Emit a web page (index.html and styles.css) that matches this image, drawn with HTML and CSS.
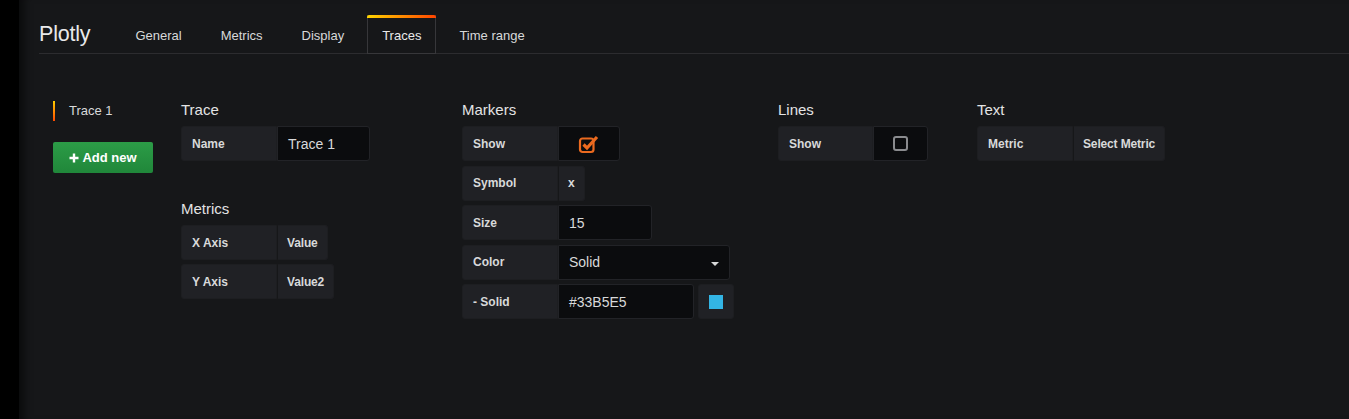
FILE: index.html
```html
<!DOCTYPE html>
<html>
<head>
<meta charset="utf-8">
<link rel="stylesheet" href="styles.css">
</head>
<body>
<div class="page">
  <div class="strip"></div>
  <div class="panel">
    <div class="header">
      <div class="title">Plotly</div>
      <div class="tab">General</div>
      <div class="tab">Metrics</div>
      <div class="tab">Display</div>
      <div class="tab active">Traces</div>
      <div class="tab">Time range</div>
    </div>
    <div class="content">
      <div class="sidebar">
        <div class="trace-item">Trace 1</div>
        <button class="btn-add"><svg class="plus" width="10" height="10" viewBox="0 0 10 10"><path d="M5 0.5V9.5M0.5 5H9.5" stroke="#fff" stroke-width="2.4"/></svg>Add new</button>
      </div>

      <div class="section sec-trace">
        <div class="heading">Trace</div>
        <div class="row">
          <div class="label w96">Name</div>
          <div class="input w93">Trace 1</div>
        </div>
        <div class="heading mt">Metrics</div>
        <div class="row">
          <div class="label w96">X Axis</div>
          <div class="label val">Value</div>
        </div>
        <div class="row">
          <div class="label w96">Y Axis</div>
          <div class="label val">Value2</div>
        </div>
      </div>

      <div class="section sec-markers">
        <div class="heading">Markers</div>
        <div class="row">
          <div class="label w96">Show</div>
          <div class="input cbox w62">
            <svg width="22" height="20" viewBox="0 0 22 20"><rect x="2" y="4.5" width="13.5" height="13.5" rx="2.5" fill="none" stroke="#eb6a1f" stroke-width="2.2"/><path d="M5.5 10.5L9 14L19 3" fill="none" stroke="#eb6a1f" stroke-width="3.2"/></svg>
          </div>
        </div>
        <div class="row">
          <div class="label w96">Symbol</div>
          <div class="label val">x</div>
        </div>
        <div class="row">
          <div class="label w96">Size</div>
          <div class="input w94">15</div>
        </div>
        <div class="row">
          <div class="label w96">Color</div>
          <div class="input select w172">Solid<span class="caret"></span></div>
        </div>
        <div class="row">
          <div class="label w96">- Solid</div>
          <div class="input w136">#33B5E5</div>
          <div class="label swatch-box"><span class="swatch"></span></div>
        </div>
      </div>

      <div class="section sec-lines">
        <div class="heading">Lines</div>
        <div class="row">
          <div class="label w95">Show</div>
          <div class="input cbox w55"><span class="unchecked"></span></div>
        </div>
      </div>

      <div class="section sec-text">
        <div class="heading">Text</div>
        <div class="row">
          <div class="label w96">Metric</div>
          <div class="label val">Select Metric</div>
        </div>
      </div>
    </div>
  </div>
</div>
</body>
</html>
```

FILE: styles.css
```css
html, body {
  margin: 0;
  padding: 0;
  background: #000;
  height: 100%;
}
body {
  font-family: "Liberation Sans", Arial, sans-serif;
  color: #d8d9da;
}
.page {
  display: flex;
  height: 419px;
}
.strip {
  width: 19px;
  background: #000;
  flex: none;
}
.panel {
  flex: 1;
  background: #161719;
  box-shadow: inset 11px 0 9px -6px rgba(0, 0, 0, 0.55);
  padding-left: 20px;
}
.header {
  display: flex;
  align-items: stretch;
  margin-top: 15px;
  height: 38px;
  border-bottom: 1px solid #2c2c2f;
}
.title {
  font-size: 21.5px;
  color: #e9e9ea;
  display: flex;
  align-items: center;
  margin-right: 29px;
  letter-spacing: -0.2px;
  padding-top: 1px;
}
.tab {
  font-size: 13px;
  color: #d8d9da;
  padding: 0 15px;
  margin-right: 7px;
  display: flex;
  align-items: center;
  border: 1px solid transparent;
  border-top: 0;
  padding-top: 3px;
}
.tab.active {
  position: relative;
  border-color: #37373a;
  background: #161719;
  margin-bottom: -1px;
  color: #e9e9ea;
  padding-left: 14px;
  padding-right: 14px;
}
.tab.active::before {
  content: "";
  position: absolute;
  left: -1px;
  right: -1px;
  top: 0;
  height: 3px;
  background: linear-gradient(90deg, #ffd500, #ff4400);
  border-radius: 2px 2px 0 0;
}
.content {
  display: flex;
  align-items: flex-start;
  padding-top: 47px;
}
.sidebar {
  width: 100px;
  margin-left: 14px;
  margin-right: 28px;
  display: flex;
  flex-direction: column;
}
.trace-item {
  font-size: 13px;
  height: 20px;
  line-height: 20px;
  padding-left: 14px;
  border-left: 2px solid;
  border-image: linear-gradient(#ffd500, #ff4400) 1;
  color: #d8d9da;
}
.btn-add {
  margin-top: 21px;
  width: 100px;
  height: 31px;
  border: 0;
  border-radius: 2px;
  background: linear-gradient(#2c9c47, #20873a);
  color: #fff;
  font-family: "Liberation Sans", Arial, sans-serif;
  font-weight: bold;
  font-size: 13px;
  display: flex;
  align-items: center;
  justify-content: center;
  padding: 0;
}
.plus {
  margin-right: 3px;
}
.section {
  display: flex;
  flex-direction: column;
  align-items: flex-start;
}
.sec-trace { width: 281px; }
.sec-markers { width: 316px; }
.sec-lines { width: 199px; }
.heading {
  font-size: 15px;
  line-height: 18px;
  height: 18px;
  margin-bottom: 7px;
  color: #e3e3e4;
}
.heading.mt {
  margin-top: 35px;
}
.row {
  display: flex;
  height: 35px;
  margin-bottom: 4px;
}
.sec-markers .row {
  margin-bottom: 4.5px;
}
.label {
  box-sizing: border-box;
  height: 100%;
  background: #202125;
  border: 1px solid #1d1e21;
  border-radius: 3px;
  font-size: 12px;
  font-weight: bold;
  color: #d8d9da;
  display: flex;
  align-items: center;
  padding: 0 10px;
  white-space: nowrap;
}
.label.w96 { width: 96px; border-radius: 3px 0 0 3px; }
.label.w95 { width: 95px; border-radius: 3px 0 0 3px; }
.label.val {
  border-radius: 0 3px 3px 0;
  border-left-color: #161719;
  padding: 0 9px;
  letter-spacing: -0.15px;
}
.input {
  box-sizing: border-box;
  height: 100%;
  background: #0b0c0e;
  border: 1px solid #222327;
  border-radius: 0 3px 3px 0;
  font-size: 14px;
  color: #d8d9da;
  display: flex;
  align-items: center;
  padding: 0 10px;
  white-space: nowrap;
}
.w93 { width: 93px; }
.w94 { width: 94px; }
.w136 { width: 136px; }
.w172 { width: 172px; }
.w62 { width: 62px; }
.w55 { width: 55px; }
.cbox {
  justify-content: center;
  padding: 0;
}
.select {
  position: relative;
}
.caret {
  position: absolute;
  right: 10px;
  top: 16px;
  width: 0;
  height: 0;
  border-left: 4px solid transparent;
  border-right: 4px solid transparent;
  border-top: 4px solid #d8d9da;
}
.swatch-box {
  margin-left: 4px;
  width: 36px;
  justify-content: center;
  padding: 0;
  border-radius: 3px;
}
.swatch {
  width: 14px;
  height: 14px;
  background: #33b5e5;
  display: block;
}
.unchecked {
  display: block;
  box-sizing: border-box;
  width: 15px;
  height: 15px;
  border: 2px solid #8a8b8e;
  border-radius: 3px;
  margin-top: -1px;
}
```
